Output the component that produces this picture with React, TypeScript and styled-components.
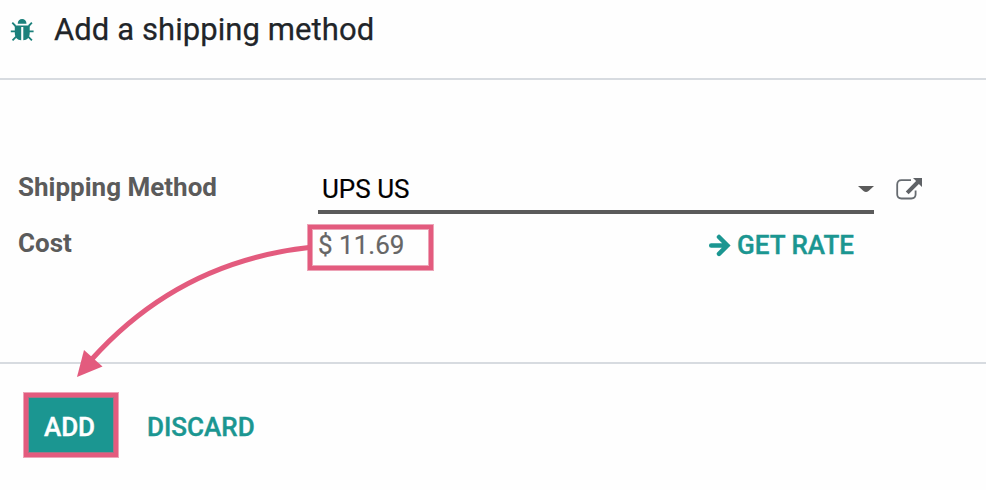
import React from "react";
import styled, { createGlobalStyle } from "styled-components";

const teal = "#1b9691";
const pink = "#e35b7e";
const pinkEdge = "#eda4b7";

const GlobalStyle = createGlobalStyle`
  * { box-sizing: border-box; }
  body {
    margin: 0;
    background: #fefefe;
    font-family: Roboto, "Liberation Sans", sans-serif;
  }
`;

const Dialog = styled.main`
  position: relative;
  display: flex;
  flex-direction: column;
  width: 986px;
  height: 490px;
  overflow: hidden;
  background: #fefefe;
`;

const Header = styled.header`
  display: flex;
  align-items: flex-start;
  height: 80px;
  padding: 11px 0 0 10px;
  border-bottom: 2px solid #d7dbe0;
`;

const BugIcon = styled.svg`
  flex: none;
  width: 26px;
  height: 26px;
  margin-top: 7px;
`;

const Title = styled.h1`
  margin: 0 0 0 18px;
  font-size: 31px;
  line-height: 37px;
  font-weight: 400;
  letter-spacing: 0.08px;
  -webkit-text-stroke: 0.25px;
  color: #212529;
  white-space: nowrap;
`;

const Body = styled.section`
  display: grid;
  grid-template-columns: 300px 556px 1fr;
  grid-template-rows: 48px 52px;
  row-gap: 8px;
  height: 284px;
  padding: 86px 0 0 18px;
  border-bottom: 2px solid #d7dbe0;
`;

const Label = styled.label`
  font-size: 26px;
  line-height: 42px;
  font-weight: 700;
  color: #5b5b5b;
  white-space: nowrap;
`;

const SelectField = styled.div`
  display: flex;
  align-items: flex-start;
  justify-content: space-between;
  height: 48px;
  padding-left: 4px;
  border-bottom: 4px solid #5b5b5b;
`;

const Value = styled.span`
  font-size: 26px;
  line-height: 46px;
  color: #000;
  white-space: nowrap;
  -webkit-text-stroke: 0.2px;
`;

const Caret = styled.svg`
  width: 16px;
  height: 8px;
  margin-top: 19px;
`;

const ExternalIcon = styled.svg`
  width: 28px;
  height: 26px;
  margin: 10px 0 0 21px;
`;

const CostField = styled.div`
  display: flex;
  justify-content: space-between;
  align-items: flex-start;
  padding-right: 20px;
`;

const Cost = styled.span`
  font-size: 26px;
  line-height: 46px;
  color: #666;
  white-space: nowrap;
  -webkit-text-stroke: 0.2px;
`;

const TextButton = styled.button`
  display: flex;
  align-items: center;
  gap: 6px;
  height: 46px;
  padding: 0;
  border: 0;
  background: none;
  font: 500 26px/46px Roboto, "Liberation Sans", sans-serif;
  -webkit-text-stroke: 0.4px;
  color: ${teal};
  white-space: nowrap;
`;

const Footer = styled.footer`
  display: flex;
  align-items: center;
  gap: 29px;
  padding: 29px 0 0 24px;
`;

const AddButton = styled.button`
  width: 94px;
  height: 64px;
  padding: 3px 3px 0 0;
  border: 4px solid ${pink};
  box-shadow: 0 0 0 1px ${pinkEdge}, inset 0 0 0 1px #a47486;
  background: ${teal};
  font: 500 26px/46px Roboto, "Liberation Sans", sans-serif;
  -webkit-text-stroke: 0.4px;
  color: #fff;
`;

const Discard = styled(TextButton)`
  padding-top: 3px;
`;

const CostHighlight = styled.div`
  position: absolute;
  left: 308px;
  top: 225px;
  width: 125px;
  height: 45px;
  border: 4px solid ${pink};
  box-shadow: 0 0 0 1px ${pinkEdge}, inset 0 0 0 1px ${pinkEdge};
`;

const Pointer = styled.svg`
  position: absolute;
  left: 70px;
  top: 235px;
  width: 240px;
  height: 145px;
  pointer-events: none;
`;

export default function App() {
  return (
    <>
      <GlobalStyle />
      <Dialog>
        <Header>
          <BugIcon viewBox="0 0 26 26" aria-hidden="true">
            <path d="M7.7 5.7a4.4 4.8 0 0 1 8.8 0z" fill="#1b807b" />
            <path
              d="M4.8 7.4h14.9v7.6c0 4.5-2.4 7.1-6.4 7.3V9h-2.1v13.3c-3.9-.2-6.4-2.8-6.4-7.3z"
              fill="#1b807b"
            />
            <path
              d="M2.3 4.7 5.5 8M21.9 4.7 18.7 8M.8 13.4h5M18.6 13.4h5M6.2 18.6l-3.7 3.8M18.2 18.6l3.7 3.8"
              fill="none"
              stroke="#1b807b"
              strokeWidth="1.8"
            />
          </BugIcon>
          <Title>Add a shipping method</Title>
        </Header>
        <Body>
          <Label>Shipping Method</Label>
          <SelectField>
            <Value>UPS US</Value>
            <Caret viewBox="0 0 16 8" aria-hidden="true">
              <path d="M0 1h16L10.5 6q-2.5 2-5 0z" fill="#5b5b5b" />
            </Caret>
          </SelectField>
          <ExternalIcon viewBox="0 0 28 26" aria-hidden="true">
            <path
              d="M16 4.2H6.5Q2.2 4.2 2.2 8.5v9.8q0 4.2 4.3 4.2h9.8q4.3 0 4.3-4.2V14.5"
              fill="none"
              stroke="#666b70"
              strokeWidth="1.8"
            />
            <path d="M18 2h9v9l-3.1-3.1-10.3 10.3-2.8-2.8L21.1 5.1z" fill="#5f6266" />
          </ExternalIcon>
          <Label>Cost</Label>
          <CostField>
            <Cost>$ 11.69</Cost>
            <TextButton>
              <svg width="23" height="24" viewBox="0 0 23 24" aria-hidden="true">
                <path
                  d="M3.2 12.4h15M11 4l8.4 8.4-8.4 8.4"
                  fill="none"
                  stroke={teal}
                  strokeWidth="4.5"
                  strokeLinecap="round"
                />
              </svg>
              GET RATE
            </TextButton>
          </CostField>
        </Body>
        <Footer>
          <AddButton>ADD</AddButton>
          <Discard>DISCARD</Discard>
        </Footer>
        <CostHighlight />
        <Pointer viewBox="70 235 240 145" aria-hidden="true">
          <path
            d="M309 247.5Q179 262 92 359"
            fill="none"
            stroke={pink}
            strokeWidth="5"
          />
          <path d="M77 377 84 350 102.5 366.5z" fill={pink} />
        </Pointer>
      </Dialog>
    </>
  );
}
